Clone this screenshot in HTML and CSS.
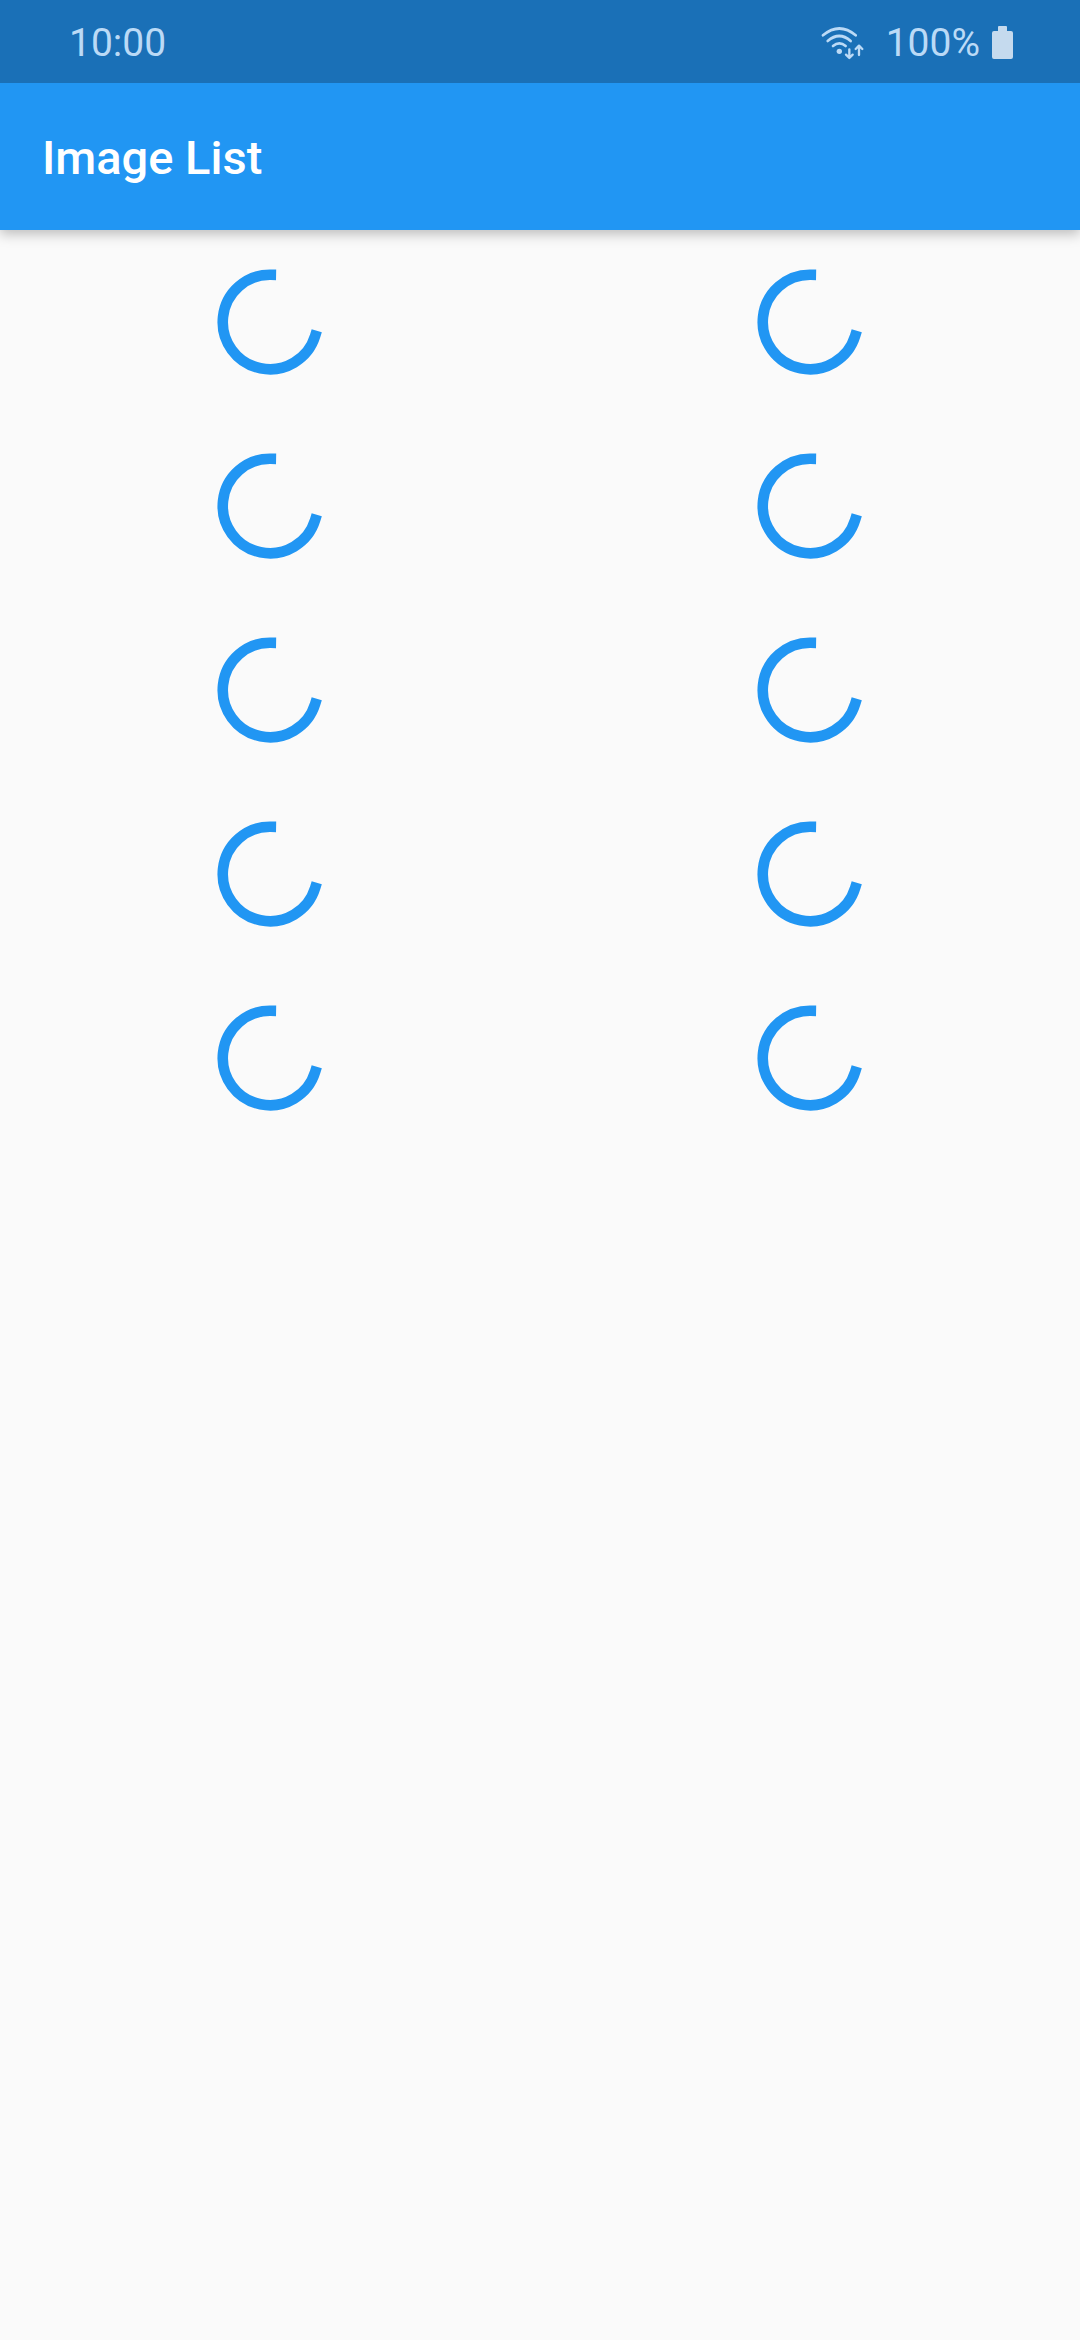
FILE: index.html
```html
<!DOCTYPE html>
<html lang="en">
<head>
<meta charset="utf-8">
<meta name="viewport" content="width=device-width, initial-scale=1">
<title>Image List</title>
<link rel="stylesheet" href="styles.css">
</head>
<body>
<svg class="defs" aria-hidden="true">
  <symbol id="spinner" viewBox="0 0 106 106">
    <path d="M98.2 66.8A47.25 47.25 0 1 1 53.8 5.76" fill="none" stroke="currentColor" stroke-width="10.6" stroke-linecap="square"/>
  </symbol>
</svg>
<div class="status-bar">
  <time class="clock">10:00</time>
  <div class="indicators">
    <svg class="wifi" viewBox="54 42 129 102" role="img" aria-label="Wi-Fi">
      <g fill="none" stroke="currentColor" stroke-width="8" stroke-linecap="round" stroke-linejoin="round">
        <path d="M60 70Q109 29 158 70"/>
        <path d="M74 87Q109 57 143 87"/>
        <path d="M90 102Q109 86 128 102"/>
        <path d="M139 112V136M129 128L139 138L149 128" stroke-width="7"/>
        <path d="M168 129V103M158 111L168 101L178 111" stroke-width="7"/>
      </g>
      <circle cx="109" cy="118" r="8" fill="currentColor"/>
    </svg>
    <span class="level">100%</span>
    <svg class="battery" viewBox="0 0 21 33" role="img" aria-label="Battery full">
      <path d="M6 1Q6 0 7 0H14Q15 0 15 1V5H19Q21 5 21 7V31Q21 33 19 33H2Q0 33 0 31V7Q0 5 2 5H6Z" fill="currentColor"/>
    </svg>
  </div>
</div>
<header class="app-bar">
  <h1 class="title">Image List</h1>
</header>
<main class="image-grid">
  <div class="cell"><svg class="spinner"><use href="#spinner"/></svg></div>
  <div class="cell"><svg class="spinner"><use href="#spinner"/></svg></div>
  <div class="cell"><svg class="spinner"><use href="#spinner"/></svg></div>
  <div class="cell"><svg class="spinner"><use href="#spinner"/></svg></div>
  <div class="cell"><svg class="spinner"><use href="#spinner"/></svg></div>
  <div class="cell"><svg class="spinner"><use href="#spinner"/></svg></div>
  <div class="cell"><svg class="spinner"><use href="#spinner"/></svg></div>
  <div class="cell"><svg class="spinner"><use href="#spinner"/></svg></div>
  <div class="cell"><svg class="spinner"><use href="#spinner"/></svg></div>
  <div class="cell"><svg class="spinner"><use href="#spinner"/></svg></div>
</main>
</body>
</html>
```
FILE: styles.css
```css
* {
  box-sizing: border-box;
}

body {
  margin: 0;
  min-height: 100vh;
  background: #fafafa;
  font-family: Roboto, "Liberation Sans", sans-serif;
}

.defs {
  display: none;
}

.status-bar {
  position: relative;
  z-index: 1;
  display: flex;
  align-items: center;
  justify-content: space-between;
  height: 83px;
  padding: 2px 67px 0 69px;
  background: #1a70b7;
  color: #bbdaf6;
  font-size: 39px;
  font-weight: 400;
  line-height: 44px;
}

.indicators {
  display: flex;
  align-items: center;
}

.wifi {
  width: 43px;
  height: 34px;
  margin-right: 22px;
}

.battery {
  width: 21px;
  height: 33px;
  margin-left: 12px;
  color: #c5daee;
}

.app-bar {
  display: flex;
  align-items: center;
  height: 147px;
  padding: 2px 42px 0;
  background: #2196f3;
  box-shadow: 0 4px 12px rgba(0, 0, 0, 0.25);
}

.title {
  margin: 0;
  color: #fff;
  font-size: 47px;
  font-weight: 500;
  line-height: 56px;
}

.image-grid {
  display: grid;
  grid-template-columns: 1fr 1fr;
  grid-auto-rows: 184px;
}

.cell {
  display: grid;
  place-items: center;
}

.spinner {
  width: 106px;
  height: 106px;
  color: #2196f3;
}
```
